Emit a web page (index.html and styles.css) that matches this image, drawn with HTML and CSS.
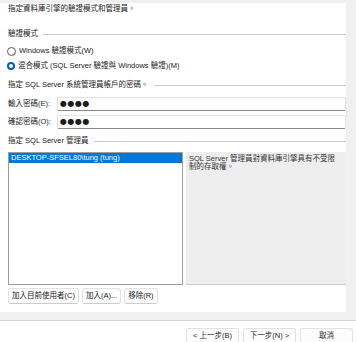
FILE: index.html
```html
<!DOCTYPE html>
<html lang="zh-Hant">
<head>
    <meta charset="UTF-8">
    <title>驗證模式</title>
    <link rel="stylesheet" href="styles.css">
</head>
<body>
    <div class="window">
        <div class="panel">
            <p class="intro">指定資料庫引擎的驗證模式和管理員。</p>

            <div class="group-title">驗證模式</div>
            <label class="radio"><span class="radio-mark"></span>Windows 驗證模式(W)</label>
            <label class="radio checked"><span class="radio-mark"></span>混合模式 (SQL Server 驗證與 Windows 驗證)(M)</label>

            <div class="group-title">指定 SQL Server 系統管理員帳戶的密碼。</div>
            <div class="field">
                <span class="field-label">輸入密碼(E):</span>
                <div class="input">●●●●</div>
            </div>
            <div class="field">
                <span class="field-label">確認密碼(O):</span>
                <div class="input">●●●●</div>
            </div>

            <div class="group-title">指定 SQL Server 管理員</div>
            <div class="admins">
                <div class="listbox">
                    <div class="list-item selected">DESKTOP-SFSEL80\tung (tung)</div>
                </div>
                <div class="desc">SQL Server 管理員對資料庫引擎具有不受限制的存取權。</div>
            </div>
            <div class="list-buttons">
                <button class="btn">加入目前使用者(C)</button>
                <button class="btn">加入(A)...</button>
                <button class="btn">移除(R)</button>
            </div>
        </div>

        <div class="footer">
            <button class="btn wide">&lt; 上一步(B)</button>
            <button class="btn wide">下一步(N) &gt;</button>
            <button class="btn wide">取消</button>
        </div>
    </div>
</body>
</html>
```

FILE: styles.css
```css
body {
    margin: 0;
    padding: 0;
    background-color: #f0f0f0;
    color: #1b1b1b;
    font-family: "Liberation Sans", "Noto Sans CJK TC", sans-serif;
    font-size: 7.5px;
    line-height: 8px;
    overflow: hidden;
}
.window {
    width: 356px;
    height: 342px;
    padding-top: 3px;
    box-sizing: border-box;
}
.panel {
    width: 346px;
    height: 309px;
    box-sizing: border-box;
    padding: 2px 0 0 8px;
    background: #fff;
}
.intro {
    margin: 0;
}
.group-title {
    display: flex;
    align-items: center;
    gap: 5px;
    white-space: nowrap;
    margin-top: 17px;
}
.group-title::after {
    content: "";
    flex: 1;
    height: 1px;
    background: #c6c6c6;
}
.radio {
    display: flex;
    align-items: center;
    height: 10px;
    margin-left: -1px;
    white-space: nowrap;
}
.radio + .radio {
    margin-top: 5px;
}
.group-title + .radio {
    margin-top: 8px;
}
.radio-mark {
    width: 7px;
    height: 7px;
    border: 1px solid #5a5a5a;
    border-radius: 50%;
    margin-right: 3px;
    background: #fff;
}
.radio.checked .radio-mark {
    border: 2.5px solid #005fb8;
    width: 4px;
    height: 4px;
}
.radio + .group-title {
    margin-top: 10px;
}
.field {
    display: flex;
    align-items: center;
    margin-top: 4px;
}
.group-title + .field {
    margin-top: 8px;
}
.field-label {
    width: 49px;
    white-space: nowrap;
}
.input {
    flex: 1;
    height: 12px;
    border: 1px solid #e3e3e3;
    border-bottom-color: #8a8a8a;
    border-radius: 2px;
    background: #fff;
    font-family: "DejaVu Sans", sans-serif;
    font-size: 8px;
    line-height: 12px;
    letter-spacing: 0.5px;
    padding-left: 2px;
}
.field + .group-title {
    margin-top: 8px;
}
.admins {
    display: flex;
    gap: 3px;
    height: 133px;
    margin-top: 7px;
}
.listbox {
    width: 175px;
    box-sizing: border-box;
    border: 1px solid #9d9d9d;
    background: #fff;
}
.list-item {
    height: 10px;
    line-height: 10px;
    padding-left: 2px;
    white-space: nowrap;
}
.list-item.selected {
    background: #0078d7;
    color: #fff;
}
.desc {
    flex: 1;
    box-sizing: border-box;
    padding: 3px 4px 0 3px;
    background: #eeeeee;
    border-bottom: 1px solid #c9c9c9;
    color: #333;
}
.list-buttons {
    display: flex;
    gap: 3px;
    margin-top: 3px;
}
.btn {
    height: 16px;
    padding: 0 3px;
    border: 1px solid #e1e1e1;
    border-bottom-color: #cbcbcb;
    border-radius: 3px;
    background: #fdfdfd;
    color: #1b1b1b;
    font: inherit;
    line-height: 14px;
    white-space: nowrap;
}
.footer {
    display: flex;
    justify-content: flex-end;
    gap: 4px;
    margin-top: 8px;
    padding: 7px 3px 0 0;
    height: 30px;
    border-top: 1px solid #d4d4d4;
    background: #fff;
}
.btn.wide {
    width: 53px;
}
```
